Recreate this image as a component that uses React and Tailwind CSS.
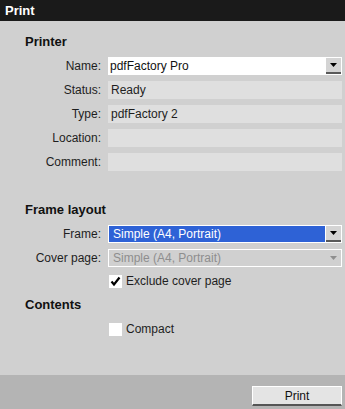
import React from "react";

const font = { fontFamily: '"Liberation Sans", Arial, sans-serif' };

const Arrow = ({ color = "#000" }) => (
  <svg width="7" height="4" viewBox="0 0 7 4">
    <polygon points="0,0 7,0 3.5,4" fill={color} />
  </svg>
);

const Row = ({ label, children }) => (
  <div className="flex items-center h-[18px]">
    <div className="w-[101px] text-right text-[12px] leading-[18px] text-[#1e1e1e]">{label}</div>
    <div className="ml-[7px] mr-[3px] flex-1 h-full">{children}</div>
  </div>
);

const ReadOnly = ({ value }) => (
  <div className="h-full bg-[#dfdfdf] pl-[3px] text-[12px] leading-[18px] text-[#1e1e1e]">{value}</div>
);

const Check = ({ checked, label }) => (
  <div className="flex items-center h-[18px] pl-[109px]">
    <div className="w-[13px] h-[13px] bg-white flex items-center justify-center">
      {checked && (
        <svg width="11" height="11" viewBox="0 0 11 11">
          <path d="M1.5 5.5 L4 8.5 L9.5 1.5" fill="none" stroke="#000" strokeWidth="2.2" />
        </svg>
      )}
    </div>
    <span className="ml-[4px] text-[12px] leading-[18px] text-[#1e1e1e]">{label}</span>
  </div>
);

const Header = ({ children, className }) => (
  <div className={`pl-[25px] h-[16px] text-[13px] leading-[16px] font-bold text-[#111] ${className}`}>{children}</div>
);

export default function App() {
  return (
    <div className="w-[345px] h-[409px] flex flex-col bg-[#d0d0d0]" style={font}>
      <div className="h-[21px] bg-[#1a1a1a] text-white font-bold text-[13px] leading-[21px] pl-[5px]">Print</div>

      <Header className="mt-[13px]">Printer</Header>
      <div className="mt-[7px] flex flex-col gap-[6px]">
        <Row label="Name:">
          <div className="h-full bg-white p-[1px] flex">
            <div className="flex-1 pl-[1px] text-[12px] leading-[16px] text-[#111]">pdfFactory Pro</div>
            <div className="w-[15px] h-full bg-[#d4d4d4] border-b-2 border-[#5a5a5a] flex items-center justify-center">
              <Arrow />
            </div>
          </div>
        </Row>
        <Row label="Status:"><ReadOnly value="Ready" /></Row>
        <Row label="Type:"><ReadOnly value="pdfFactory 2" /></Row>
        <Row label="Location:"><ReadOnly value="" /></Row>
        <Row label="Comment:"><ReadOnly value="" /></Row>
      </div>

      <Header className="mt-[31px]">Frame layout</Header>
      <div className="mt-[7px] flex flex-col gap-[6px]">
        <Row label="Frame:">
          <div className="h-full bg-white p-[1px] flex gap-[1px]">
            <div className="flex-1 bg-[#2e62d6] pl-[4px] text-[12px] leading-[16px] text-white">Simple (A4, Portrait)</div>
            <div className="w-[15px] h-full bg-[#d4d4d4] border-b-2 border-[#5a5a5a] flex items-center justify-center">
              <Arrow />
            </div>
          </div>
        </Row>
        <Row label="Cover page:">
          <div className="h-full border border-white flex">
            <div className="flex-1 pl-[4px] text-[12px] leading-[16px] text-[#8e8e8e]">Simple (A4, Portrait)</div>
            <div className="w-[15px] h-full flex items-center justify-center">
              <Arrow color="#8e8e8e" />
            </div>
          </div>
        </Row>
      </div>
      <div className="mt-[5px]">
        <Check checked label="Exclude cover page" />
      </div>

      <Header className="mt-[7px]">Contents</Header>
      <div className="mt-[7px]">
        <Check label="Compact" />
      </div>

      <div className="mt-auto h-[34px] bg-[#b4b4b4] flex justify-end items-start">
        <button className="mt-[11px] mr-[3px] w-[90px] h-[20px] bg-[#e4e4e4] border-t border-l border-r border-white border-b-2 border-b-[#555] text-[12px] leading-[16px] text-[#111]">
          Print
        </button>
      </div>
    </div>
  );
}
